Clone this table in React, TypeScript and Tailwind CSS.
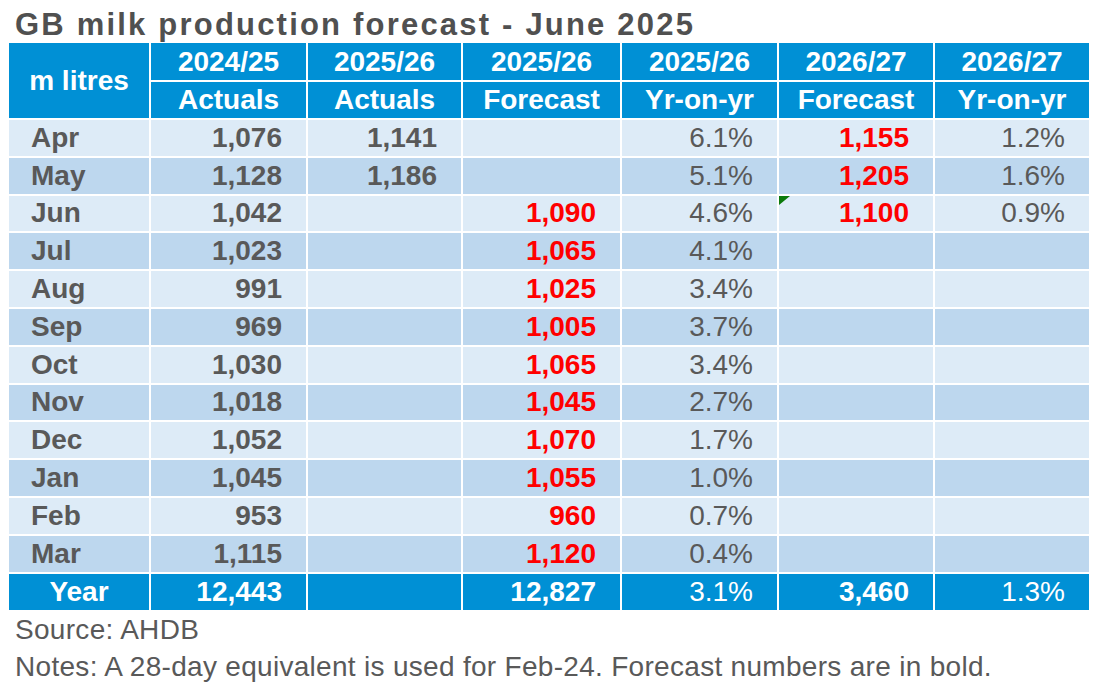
import React from 'react'

type Row = {
  month: string
  a: string
  b: string
  c: string
  d: string
  e: string
  f: string
}

const rows: Row[] = [
  { month: 'Apr', a: '1,076', b: '1,141', c: '', d: '6.1%', e: '1,155', f: '1.2%' },
  { month: 'May', a: '1,128', b: '1,186', c: '', d: '5.1%', e: '1,205', f: '1.6%' },
  { month: 'Jun', a: '1,042', b: '', c: '1,090', d: '4.6%', e: '1,100', f: '0.9%' },
  { month: 'Jul', a: '1,023', b: '', c: '1,065', d: '4.1%', e: '', f: '' },
  { month: 'Aug', a: '991', b: '', c: '1,025', d: '3.4%', e: '', f: '' },
  { month: 'Sep', a: '969', b: '', c: '1,005', d: '3.7%', e: '', f: '' },
  { month: 'Oct', a: '1,030', b: '', c: '1,065', d: '3.4%', e: '', f: '' },
  { month: 'Nov', a: '1,018', b: '', c: '1,045', d: '2.7%', e: '', f: '' },
  { month: 'Dec', a: '1,052', b: '', c: '1,070', d: '1.7%', e: '', f: '' },
  { month: 'Jan', a: '1,045', b: '', c: '1,055', d: '1.0%', e: '', f: '' },
  { month: 'Feb', a: '953', b: '', c: '960', d: '0.7%', e: '', f: '' },
  { month: 'Mar', a: '1,115', b: '', c: '1,120', d: '0.4%', e: '', f: '' },
]

const head = 'flex items-center justify-center bg-[#0090d5] text-white font-bold'
const num = 'flex items-center justify-end pr-[24px]'

export default function App() {
  return (
    <div
      className="w-[1099px] h-[692px] bg-white pl-[9px] text-[#595959]"
      style={{ fontFamily: '"Liberation Sans", Arial, sans-serif' }}
    >
      <h1 className="pl-[6px] pt-[8px] h-[43px] text-[31px] leading-[33px] font-bold tracking-[2.2px] text-[#505050]">
        GB milk production forecast - June 2025
      </h1>

      <div className="grid w-[1080px] grid-cols-[140px_155px_153px_157px_155px_154px_154px] grid-rows-[37px_36px_repeat(12,35.8px)_36px] gap-[2px] bg-white text-[28px] leading-none">
        <div className={`${head} row-span-2`}>m litres</div>
        <div className={head}>2024/25</div>
        <div className={head}>2025/26</div>
        <div className={head}>2025/26</div>
        <div className={head}>2025/26</div>
        <div className={head}>2026/27</div>
        <div className={head}>2026/27</div>
        <div className={head}>Actuals</div>
        <div className={head}>Actuals</div>
        <div className={head}>Forecast</div>
        <div className={head}>Yr-on-yr</div>
        <div className={head}>Forecast</div>
        <div className={head}>Yr-on-yr</div>

        {rows.map((r, i) => {
          const bg = i % 2 === 0 ? 'bg-[#ddebf7]' : 'bg-[#bdd7ee]'
          return (
            <React.Fragment key={r.month}>
              <div className={`${bg} flex items-center pl-[22px] font-bold`}>{r.month}</div>
              <div className={`${bg} ${num} font-bold`}>{r.a}</div>
              <div className={`${bg} ${num} font-bold`}>{r.b}</div>
              <div className={`${bg} ${num} font-bold text-[#ff0000]`}>{r.c}</div>
              <div className={`${bg} ${num}`}>{r.d}</div>
              <div className={`${bg} ${num} relative font-bold text-[#ff0000]`}>
                {r.month === 'Jun' && (
                  <svg className="absolute left-0 top-0" width="11" height="9" viewBox="0 0 11 9">
                    <polygon points="0,0 11,0 0,9" fill="#0b7a0b" />
                  </svg>
                )}
                {r.e}
              </div>
              <div className={`${bg} ${num}`}>{r.f}</div>
            </React.Fragment>
          )
        })}

        <div className={head}>Year</div>
        <div className={`bg-[#0090d5] text-white font-bold ${num}`}>12,443</div>
        <div className="bg-[#0090d5]" />
        <div className={`bg-[#0090d5] text-white font-bold ${num}`}>12,827</div>
        <div className={`bg-[#0090d5] text-white ${num}`}>3.1%</div>
        <div className={`bg-[#0090d5] text-white font-bold ${num}`}>3,460</div>
        <div className={`bg-[#0090d5] text-white ${num}`}>1.3%</div>
      </div>

      <div className="pl-[6px] pt-[1px] text-[28px] leading-[37px] tracking-[0.3px]">
        <p>Source: AHDB</p>
        <p>Notes: A 28-day equivalent is used for Feb-24. Forecast numbers are in bold.</p>
      </div>
    </div>
  )
}
